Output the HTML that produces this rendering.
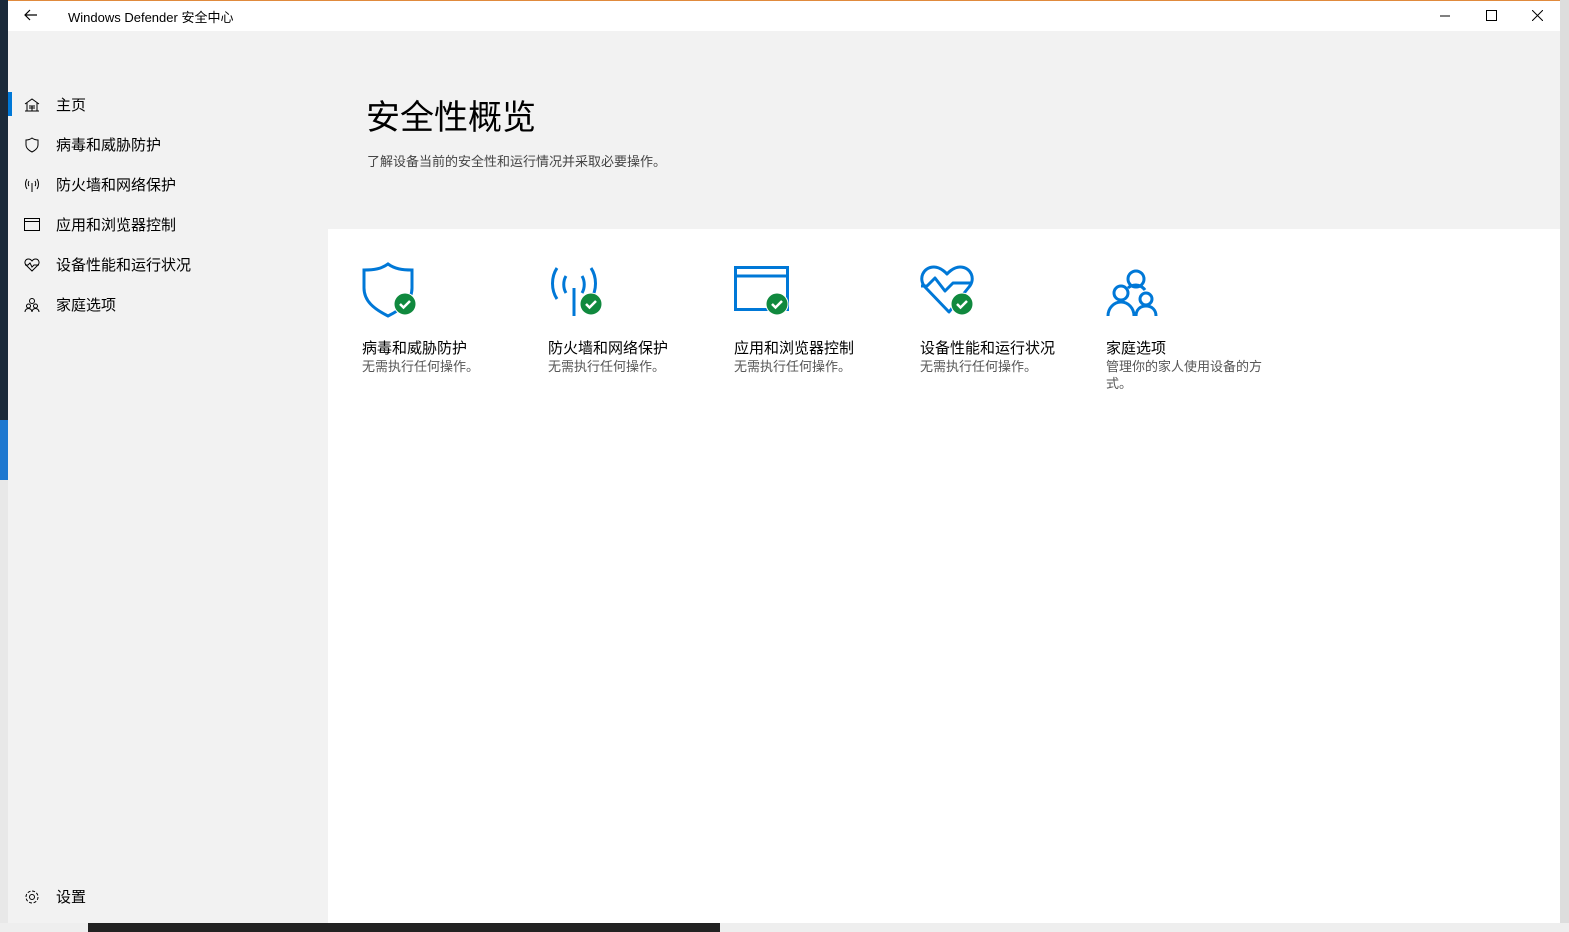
<!DOCTYPE html>
<html><head><meta charset="utf-8"><style>
*{margin:0;padding:0;box-sizing:border-box}
body{width:1569px;height:932px;overflow:hidden;background:#1b2a3a;font-family:"Liberation Sans","Noto Sans CJK SC",sans-serif;position:relative}
.win{position:absolute;left:8px;top:0;width:1552px;height:923px;background:#f2f2f2;border-top:1px solid #e08a3c}
.tb{position:absolute;left:0;top:0;width:100%;height:30px;background:#fff;font-size:13px;color:#000}
.tb .t{position:absolute;left:60px;top:6px}
.main{position:absolute;left:320px;top:228px;right:0;bottom:0;background:#fff}
.nav{position:absolute;left:0;font-size:15px;color:#000}
.nav div{position:absolute;left:48px;top:-2px;white-space:nowrap}
.nav svg{position:absolute;left:16px;top:1px}
.card{position:absolute;top:262px;width:180px}
.card .h{position:absolute;top:75px;font-size:15px;color:#000;white-space:nowrap}
.card .s{position:absolute;top:96px;font-size:13px;color:#555;line-height:17px;width:160px}
</style></head><body>
<div style="position:absolute;left:0;top:420px;width:8px;height:60px;background:#1e78d0"></div>
<div style="position:absolute;left:0;top:480px;width:8px;height:450px;background:#e8e8e8"></div>
<div style="position:absolute;left:1560px;top:0;width:9px;height:932px;background:#ddd"></div>
<div style="position:absolute;left:0;top:923px;width:1569px;height:9px;background:#eee"></div>
<div style="position:absolute;left:88px;top:923px;width:632px;height:9px;background:#222"></div>
<div class="win">
<div class="tb"><svg style="position:absolute;left:16px;top:8px" width="14" height="12" viewBox="0 0 14 12"><path d="M13 6H1M6 1L1 6l5 5" stroke="#000" fill="none" stroke-width="1.2"/></svg>
<span class="t">Windows Defender 安全中心</span>
<svg style="position:absolute;left:1432px;top:10px" width="10" height="10"><path d="M0 5h10" stroke="#000"/></svg>
<svg style="position:absolute;left:1478px;top:9px" width="11" height="11"><rect x=".5" y=".5" width="10" height="10" stroke="#000" fill="none"/></svg>
<svg style="position:absolute;left:1524px;top:9px" width="11" height="11"><path d="M0 0l11 11M11 0L0 11" stroke="#000"/></svg></div>
<div style="position:absolute;left:0;top:91px;width:4px;height:24px;background:#0078d7"></div>
<div class="nav" style="top:95px"><svg width="16" height="16" viewBox="0 0 16 16"><path d="M1 7L8 2l7 5M3 6v8h10V6M1 14h14M5 9h6M5 11h6M8 9v5" stroke="#000" fill="none"/></svg><div>主页</div></div>
<div class="nav" style="top:135px"><svg width="16" height="16" viewBox="0 0 16 16"><path d="M8 1c2 1.5 4 2 6 2v5c0 3-3 5.5-6 7C5 13.5 2 11 2 8V3c2 0 4-.5 6-2z" stroke="#000" fill="none"/></svg><div>病毒和威胁防护</div></div>
<div class="nav" style="top:175px"><svg width="16" height="16" viewBox="0 0 16 16"><path d="M8 6v9M5 4c-1 1.5-1 4 0 5M11 4c1 1.5 1 4 0 5M3 2c-2 3-2 7 0 10M13 2c2 3 2 7 0 10" stroke="#000" fill="none"/></svg><div>防火墙和网络保护</div></div>
<div class="nav" style="top:215px"><svg width="16" height="16" viewBox="0 0 16 16"><rect x=".5" y="1.5" width="15" height="12" stroke="#000" fill="none"/><path d="M1 4.5h15" stroke="#000"/></svg><div>应用和浏览器控制</div></div>
<div class="nav" style="top:255px"><svg width="16" height="16" viewBox="0 0 16 16"><path d="M8 14L2 8C0 6 1 2 4.5 2 6.5 2 8 4 8 4s1.5-2 3.5-2C15 2 16 6 14 8zM1 8h3l2-2 2 4 2-2h5" stroke="#000" fill="none"/></svg><div>设备性能和运行状况</div></div>
<div class="nav" style="top:295px"><svg width="16" height="16" viewBox="0 0 16 16"><circle cx="8" cy="4" r="2.5" stroke="#000" fill="none"/><circle cx="4.5" cy="9" r="2" stroke="#000" fill="none"/><circle cx="11.5" cy="9" r="2" stroke="#000" fill="none"/><path d="M1 15c0-2 1.5-3.5 3.5-3.5S8 13 8 15M8 15c0-2 1.5-3.5 3.5-3.5S15 13 15 15" stroke="#000" fill="none"/></svg><div>家庭选项</div></div>
<div class="nav" style="top:887px"><svg width="16" height="16" viewBox="0 0 16 16"><circle cx="8" cy="8" r="2.5" stroke="#000" fill="none"/><circle cx="8" cy="8" r="6" stroke="#000" fill="none" stroke-dasharray="3 1.7"/></svg><div>设置</div></div>
<div style="position:absolute;left:358px;top:89px;font-size:34px;color:#000">安全性概览</div>
<div style="position:absolute;left:359px;top:150px;font-size:13px;color:#444">了解设备当前的安全性和运行情况并采取必要操作。</div>
<div class="main"></div>
</div>
<svg width="0" height="0" style="position:absolute"><defs><g id="ck"><circle cx="0" cy="0" r="11" fill="#10893e" stroke="#fff" stroke-width="1"/><path d="M-5 0l3.5 3.5L5-3" stroke="#fff" stroke-width="2.5" fill="none"/></g></defs></svg>
<div class="card" style="left:362px"><svg width="60" height="60" viewBox="0 0 60 60"><path d="M26 2c7 5 14 6 24 6v18c0 13-10 21-24 28C12 47 2 39 2 26V8c10 0 17-1 24-6z" stroke="#0078d7" stroke-width="3" fill="none"/><use href="#ck" x="43" y="42"/></svg><div class="h">病毒和威胁防护</div><div class="s">无需执行任何操作。</div></div>
<div class="card" style="left:548px"><svg width="60" height="60" viewBox="0 0 60 60"><path d="M26 26v28M18 14c-3 5-3 12 0 17M34 14c3 5 3 12 0 17M9 6c-6 9-6 22 0 31M43 6c6 9 6 22 0 31" stroke="#0078d7" stroke-width="3" fill="none"/><use href="#ck" x="43" y="42"/></svg><div class="h">防火墙和网络保护</div><div class="s">无需执行任何操作。</div></div>
<div class="card" style="left:734px"><svg width="60" height="60" viewBox="0 0 60 60"><rect x="1.5" y="5.5" width="52" height="42" stroke="#0078d7" stroke-width="3" fill="none"/><path d="M2 14h51" stroke="#0078d7" stroke-width="3"/><use href="#ck" x="43" y="42"/></svg><div class="h">应用和浏览器控制</div><div class="s">无需执行任何操作。</div></div>
<div class="card" style="left:920px"><svg width="60" height="60" viewBox="0 0 60 60"><path d="M29 50L5 25C-2 17 3 5 14 5c7 0 13 7 13 7s6-7 13-7c11 0 16 12 9 20L29 50zM1 24h6l8-8 10 13 8-8h18" stroke="#0078d7" stroke-width="3" fill="none" stroke-linejoin="round"/><use href="#ck" x="42" y="42"/></svg><div class="h">设备性能和运行状况</div><div class="s">无需执行任何操作。</div></div>
<div class="card" style="left:1106px"><svg width="60" height="60" viewBox="0 0 60 60"><circle cx="30" cy="17" r="8" stroke="#0078d7" stroke-width="3" fill="none"/><circle cx="15" cy="31" r="7" stroke="#0078d7" stroke-width="3" fill="none"/><circle cx="40" cy="37" r="6" stroke="#0078d7" stroke-width="3" fill="none"/><path d="M2 54c0-8 6-14 13-14s13 6 13 14M30 54c0-6 4-10 10-10s10 4 10 10M22 26c2-2 5-3 8-3s7 2 9 5" stroke="#0078d7" stroke-width="3" fill="none"/></svg><div class="h">家庭选项</div><div class="s">管理你的家人使用设备的方式。</div></div>
</body></html>
